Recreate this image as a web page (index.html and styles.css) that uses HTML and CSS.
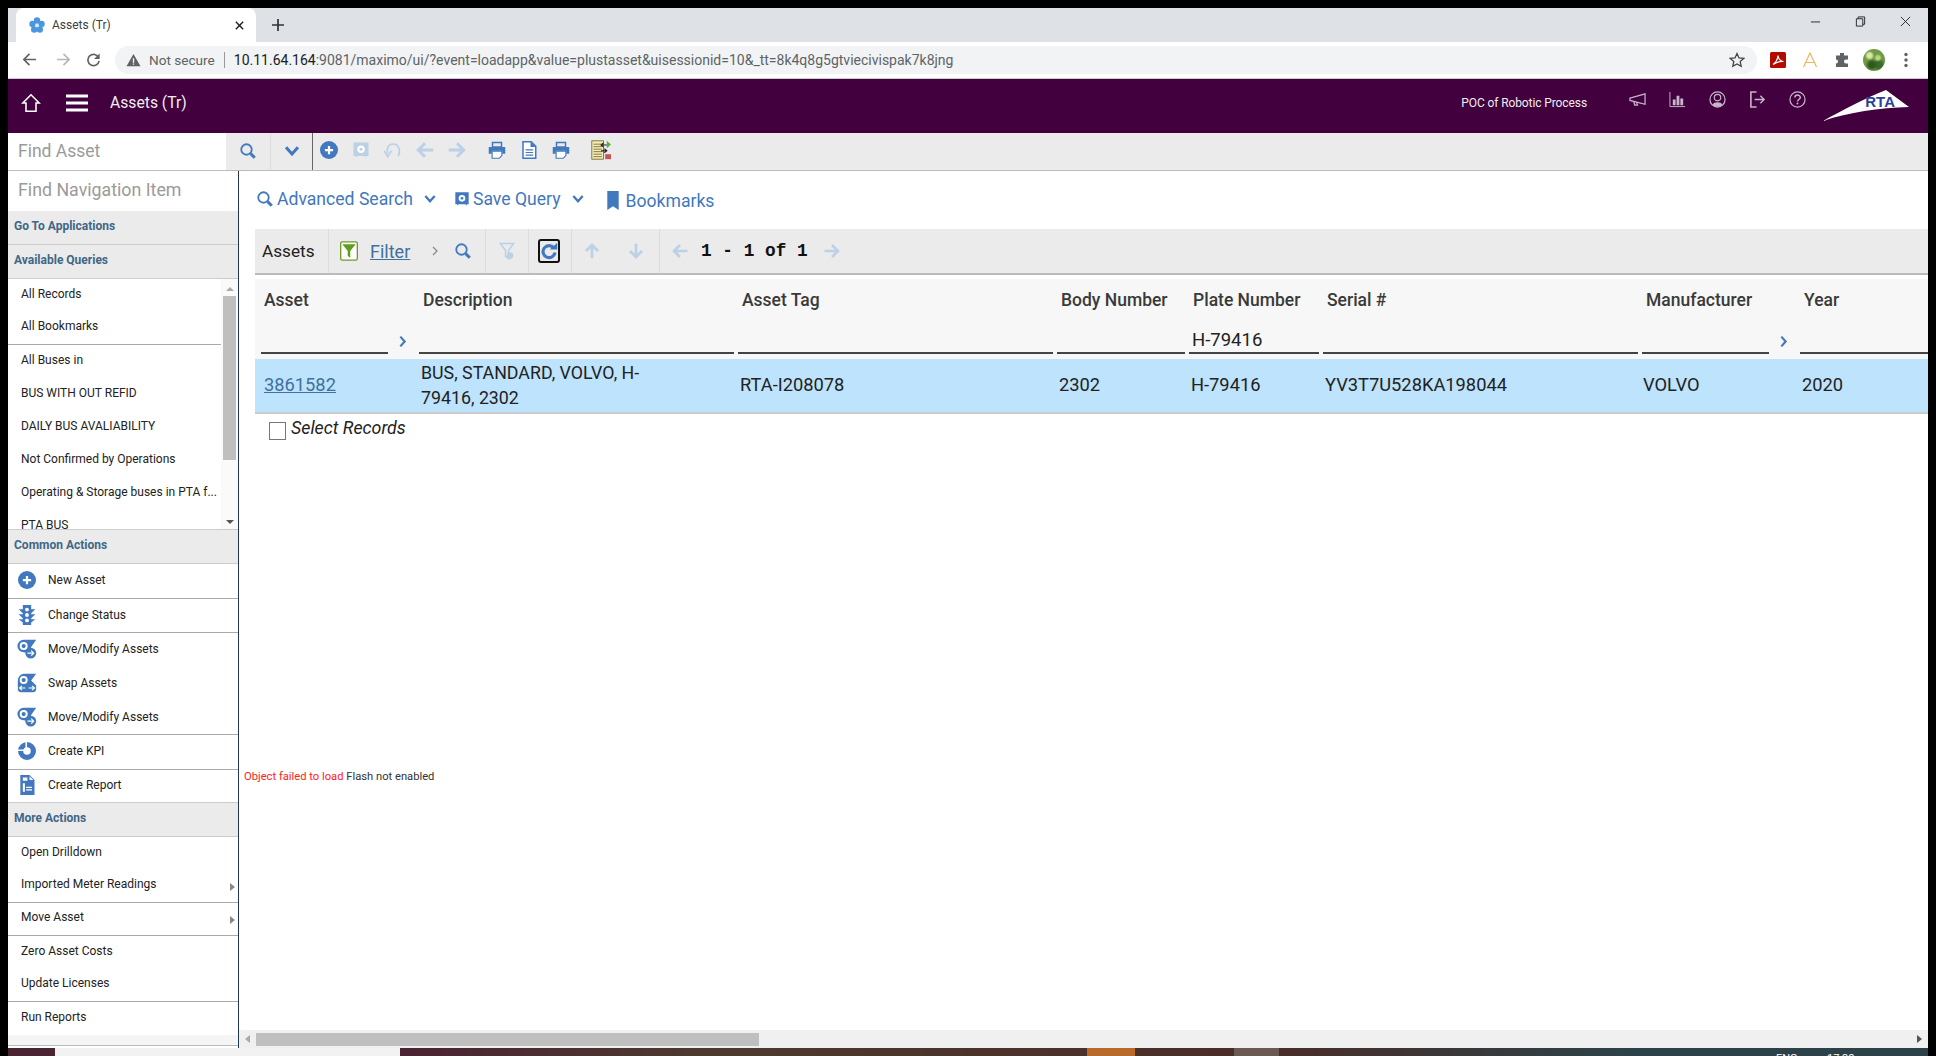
FILE: index.html
```html
<!doctype html>
<html lang="en">
  <head>
    <meta charset="UTF-8" />
    <title>Assets (Tr)</title>
    <link rel="stylesheet" href="styles.css">
  </head>

  <body>
    <svg class="defs" width="0" height="0">
      <symbol id="i-search" viewBox="0 0 24 24"><circle cx="10" cy="10" r="7" fill="none" stroke="currentColor" stroke-width="2.4"/><path d="M15.5 15.5l5.5 5.5" stroke="currentColor" stroke-width="4"/></symbol>
      <symbol id="i-chevron" viewBox="0 0 24 24"><path d="M4 7l8 9 8-9" fill="none" stroke="currentColor" stroke-width="4"/></symbol>
      <symbol id="i-right" viewBox="0 0 24 24"><path d="M8 3l8 9-8 9" fill="none" stroke="currentColor" stroke-width="4"/></symbol>
      <symbol id="i-more" viewBox="0 0 24 24"><path d="M8 4l8 8-8 8" fill="none" stroke="currentColor" stroke-width="2.500"/></symbol>
      <symbol id="i-plus" viewBox="0 0 24 24"><circle cx="12" cy="12" r="12" fill="currentColor"/><path d="M12 6.5v11M6.500 12h11" stroke="#fff" stroke-width="3"/></symbol>
      <symbol id="i-save" viewBox="0 0 24 24"><path d="M2 2h20v18h-3v2l-2-2H7l-2 2v-2H2z" fill="currentColor"/><circle cx="12" cy="11" r="5" fill="#fff"/><circle cx="12" cy="11" r="2" fill="currentColor"/></symbol>
      <symbol id="i-undo" viewBox="0 0 24 24"><path d="M19 20c3-5 2-16-7-16C5 4 3 11 5 17" fill="none" stroke="currentColor" stroke-width="2.200"/><path d="M0 13l5 8 5-8" fill="none" stroke="currentColor" stroke-width="2.200"/></symbol>
      <symbol id="i-left" viewBox="0 0 24 24"><path d="M12 3l-9 9 9 9M3 12h20" fill="none" stroke="currentColor" stroke-width="4"/></symbol>
      <symbol id="i-print" viewBox="0 0 24 24"><path d="M6 2h12v6H6z" fill="none" stroke="currentColor" stroke-width="2"/><path d="M1 8h22v9h-4v-4H5v4H1z" fill="currentColor"/><path d="M5.500 13.500h13v6l-3.500 3.500h-9.500z" fill="#fff" stroke="currentColor" stroke-width="1.500"/></symbol>
      <symbol id="i-doc" viewBox="0 0 24 24"><path d="M4 1h11l6 6v16H4z" fill="#fff" stroke="currentColor" stroke-width="2"/><path d="M14 1v7h7zM7.500 11h10v1.600h-10zM7.500 14.500h10v1.600h-10zM7.500 18h10v1.600h-10z" fill="currentColor"/></symbol>
      <symbol id="i-bookmark" viewBox="0 0 12 20"><path d="M0 0h12v20l-6-4-6 4z" fill="currentColor"/></symbol>
      <symbol id="i-filter" viewBox="0 0 24 24"><rect x="2" y="1" width="20" height="22" rx="2" fill="#fff" stroke="#6f9a2a" stroke-width="1.600"/><path d="M4 4h16l-6.500 8v8l-3-2v-6z" fill="#5f9e1f"/></symbol>
      <symbol id="i-filter-x" viewBox="0 0 24 24"><path d="M3 2h18l-7 9v11l-4-3v-8z" fill="none" stroke="currentColor" stroke-width="2"/><circle cx="16" cy="18" r="4.500" fill="currentColor"/></symbol>
      <symbol id="i-refresh" viewBox="0 0 24 24"><path d="M18.500 8A8 8 0 1 0 20 14" fill="none" stroke="currentColor" stroke-width="4.200"/><path d="M13 10h10V1z" fill="currentColor"/></symbol>
      <symbol id="i-up" viewBox="0 0 24 24"><path d="M3 12l9-9 9 9M12 3v20" fill="none" stroke="currentColor" stroke-width="4"/></symbol>
      <symbol id="i-down" viewBox="0 0 24 24"><path d="M3 12l9 9 9-9M12 21V1" fill="none" stroke="currentColor" stroke-width="4"/></symbol>
      <symbol id="i-status" viewBox="0 0 24 24"><path d="M7 0h10v5h5l-5 5v1h5l-5 5v1h5l-5 4v3H7v-3l-5-4h5v-1l-5-5h5v-1L2 5h5z" fill="currentColor"/><circle cx="12" cy="5.500" r="2.300" fill="#fff"/><circle cx="12" cy="12" r="2.300" fill="#fff"/><circle cx="12" cy="18.500" r="2.300" fill="#fff"/></symbol>
      <symbol id="i-move" viewBox="0 0 24 24"><path d="M8 1h15l-6 8.500a8 8 0 0 1-9 6.500A7.500 7.500 0 0 1 8 1z" fill="currentColor"/><circle cx="8" cy="8.500" r="4.800" fill="#fff"/><circle cx="8" cy="8.500" r="2.500" fill="currentColor"/><circle cx="16.500" cy="17" r="6.500" fill="currentColor"/><path d="M12.500 17h7M17 14l3 3-3 3" fill="none" stroke="#fff" stroke-width="1.500"/></symbol>
      <symbol id="i-swap" viewBox="0 0 24 24"><path d="M8 1h15l-6 8 6 6v5a4 4 0 0 1-4 3H5a4 4 0 0 1-4-3V9a8 8 0 0 1 7-8z" fill="currentColor"/><circle cx="8" cy="8.500" r="4.800" fill="#fff"/><circle cx="8" cy="8.500" r="2.500" fill="currentColor"/><path d="M3 18h7M6 15.500L3 18l3 2.500M14 18h7M18 15.500l3 2.500-3 2.500" fill="none" stroke="#fff" stroke-width="1.400"/></symbol>
      <symbol id="i-kpi" viewBox="0 0 24 24"><circle cx="12" cy="12" r="8.500" fill="none" stroke="currentColor" stroke-width="7"/><path d="M0 12h10v-2H0z" fill="#fff"/><path d="M10 0h2v10h-2z" fill="#fff"/></symbol>
      <symbol id="i-report" viewBox="0 0 24 24"><path d="M4 0h11l6 6v18H4z" fill="currentColor"/><path d="M7 10h2.500v10H7zM11 14h7v1.500h-7zM11 17h7v1.500h-7zM15 1.500V6h4.500zM7 3h5.500v4H7z" fill="#fff"/></symbol>
      <symbol id="i-notes" viewBox="0 0 24 24"><rect x="1" y="1" width="14" height="22" fill="#f6eeb8" stroke="#6d5f2a"/><path d="M3 5h10M3 8h10M3 11h10M3 14h10M3 17h10M3 20h10" stroke="#6d5f2a"/><path d="M19 1l5 4.500-5 4.500z" fill="#5fae3a"/><path d="M12 6h7M15 3.500L12 6l3 2.500M12 13h7M16 10.500l3 2.500-3 2.500" fill="none" stroke="#222" stroke-width="1.300"/><rect x="17" y="17" width="7" height="6" fill="#c9535d"/></symbol>
    </svg>

    <div class="screen">
      <!-- Browser tabs -->
      <div class="tabstrip">
        <div class="tab">
          <svg class="favicon" viewBox="0 0 16 16">
            <g fill="#4a97e0"><circle cx="8" cy="3.500" r="3.200"/><circle cx="12.500" cy="7" r="3.200"/><circle cx="10.800" cy="12.500" r="3.200"/><circle cx="5.200" cy="12.500" r="3.200"/><circle cx="3.500" cy="7" r="3.200"/></g>
            <circle cx="8" cy="8.500" r="1.800" fill="#dbeaf8"/>
          </svg>
          <span class="tab-title">Assets (Tr)</span>
          <svg class="tab-close" viewBox="0 0 12 12"><path d="M2 2l8 8M10 2l-8 8" stroke="#222" stroke-width="1.600"/></svg>
        </div>
        <svg class="tab-new" viewBox="0 0 14 14"><path d="M7 1v12M1 7h12" stroke="#333" stroke-width="1.700"/></svg>
        <div class="win-controls">
          <svg viewBox="0 0 12 12"><path d="M1 6.500h10" stroke="#222" stroke-width="1"/></svg>
          <svg viewBox="0 0 12 12"><path d="M3.500 3V1h7v8H8.500M1.500 3h7v8h-7z" fill="none" stroke="#222"/></svg>
          <svg viewBox="0 0 12 12"><path d="M1 1l10 10M11 1L1 11" stroke="#222"/></svg>
        </div>
      </div>

      <!-- Address bar -->
      <div class="addressbar">
        <svg class="nav-arrow" viewBox="0 0 16 16"><path d="M15 8H2M8 2L2 8l6 6" fill="none" stroke="#5f6368" stroke-width="1.800"/></svg>
        <svg class="nav-arrow nav-off" viewBox="0 0 16 16"><path d="M1 8h13M8 2l6 6-6 6" fill="none" stroke="#b4b7bb" stroke-width="1.800"/></svg>
        <svg class="nav-arrow" viewBox="0 0 16 16"><path d="M13.500 6A6 6 0 1 0 14 9.500" fill="none" stroke="#5f6368" stroke-width="1.800"/><path d="M14.500 1.500v6h-6z" fill="#5f6368"/></svg>
        <div class="omnibox">
          <svg class="warn" viewBox="0 0 16 16"><path d="M8 1l8 14H0z" fill="#5f6368"/><path d="M7.200 6h1.600v5H7.200zM7.200 12h1.600v1.500H7.200z" fill="#f1f3f4"/></svg>
          <span class="not-secure">Not secure</span>
          <span class="url"><b>10.11.64.164</b>:9081/maximo/ui/?event=loadapp&amp;value=plustasset&amp;uisessionid=10&amp;_tt=8k4q8g5gtviecivispak7k8jng</span>
          <svg class="star" viewBox="0 0 16 16"><path d="M8 1.500l2 4.400 4.800.5-3.600 3.200 1 4.700L8 11.900l-4.200 2.400 1-4.700L1.200 6.400 6 5.900z" fill="none" stroke="#444" stroke-width="1.300"/></svg>
        </div>
        <div class="extensions">
          <svg viewBox="0 0 16 16"><rect width="16" height="16" rx="1.500" fill="#b30b00"/><path d="M3 12.500c3-2 4.500-5 5-9 .5 4 2 5.500 5.500 6-4-.5-7 .5-10.500 3z" fill="none" stroke="#fff" stroke-width="1.200"/></svg>
          <svg viewBox="0 0 16 16"><path d="M1.500 15L8 1l6.500 14M4 10.500h8" fill="none" stroke="#f4b35e" stroke-width="1.200"/></svg>
          <svg viewBox="0 0 16 16"><path d="M6 1h4v2.500h4v4h-2a2 2 0 0 0 0 4h2V15H2v-3.500a2 2 0 0 0 0-4V3.500h4z" fill="#5f6368"/></svg>
          <span class="avatar"></span>
          <svg viewBox="0 0 16 16"><g fill="#5f6368"><circle cx="8" cy="2.500" r="1.700"/><circle cx="8" cy="8" r="1.700"/><circle cx="8" cy="13.500" r="1.700"/></g></svg>
        </div>
      </div>

      <!-- Maximo title bar -->
      <header class="titlebar">
        <svg class="home" viewBox="0 0 22 22"><path d="M11 2L2 11h3.500v9h11v-9H20z" fill="none" stroke="#fff" stroke-width="1.700"/></svg>
        <svg class="burger" viewBox="0 0 22 18"><path d="M0 2h22M0 9h22M0 16h22" stroke="#fff" stroke-width="3"/></svg>
        <span class="app-name">Assets (Tr)</span>
        <span class="org-name">POC of Robotic Process</span>
        <div class="title-icons">
          <svg viewBox="0 0 18 18"><path d="M1 7.500L17 3v11L1 10zM5 11l1 4h3l-1-3" fill="none" stroke="currentColor" stroke-width="1.300"/></svg>
          <svg viewBox="0 0 18 18"><path d="M1 1v15.500h16" fill="none" stroke="currentColor"/><path d="M4 9h3v6H4zM8 5h3v10H8zM12 8h3v7h-3z" fill="currentColor"/></svg>
          <svg viewBox="0 0 18 18"><circle cx="9" cy="9" r="8" fill="none" stroke="currentColor" stroke-width="1.300"/><circle cx="9" cy="7" r="3.400" fill="none" stroke="currentColor" stroke-width="1.200"/><path d="M3.500 14.500c2-3.500 9-3.500 11 0-3 3-8 3-11 0z" fill="currentColor"/></svg>
          <svg viewBox="0 0 18 18"><path d="M8 1H2v16h6" fill="none" stroke="currentColor" stroke-width="1.700"/><path d="M6 9h10M12 5l4 4-4 4" fill="none" stroke="currentColor" stroke-width="1.500"/></svg>
          <svg viewBox="0 0 18 18"><circle cx="9" cy="9" r="8" fill="none" stroke="currentColor" stroke-width="1.300"/><path d="M6.200 7c0-3.600 5.800-3.600 5.800 0 0 2-3 2-3 4.200" fill="none" stroke="currentColor" stroke-width="1.500"/><circle cx="9" cy="13.300" r="1" fill="currentColor"/></svg>
        </div>
        <div class="rta-logo">
          <svg viewBox="0 0 88 32"><path d="M0 31C20 20 42 8 63 0l23 17c-30 1-60 5-86 14z" fill="#fff"/></svg>
          <span class="rta-text">RTA</span>
        </div>
      </header>

      <!-- Find bar and app toolbar -->
      <div class="findbar">
        <div class="find-input">Find Asset</div>
        <div class="find-cell"><svg class="ico-18"><use href="#i-search"/></svg></div>
        <div class="find-cell find-last"><svg class="ico-18"><use href="#i-chevron"/></svg></div>
        <div class="tool"><svg class="ico-18"><use href="#i-plus"/></svg></div>
        <div class="tool off"><svg class="ico-18"><use href="#i-save"/></svg></div>
        <div class="tool off"><svg class="ico-18"><use href="#i-undo"/></svg></div>
        <div class="tool off"><svg class="ico-18"><use href="#i-left"/></svg></div>
        <div class="tool off flip"><svg class="ico-18"><use href="#i-left"/></svg></div>
        <div class="tool tool-gap"><svg class="ico-18"><use href="#i-print"/></svg></div>
        <div class="tool"><svg class="ico-18"><use href="#i-doc"/></svg></div>
        <div class="tool"><svg class="ico-18"><use href="#i-print"/></svg></div>
        <div class="tool tool-gap"><svg class="ico-20"><use href="#i-notes"/></svg></div>
      </div>

      <div class="main">
        <!-- Left navigation -->
        <aside class="sidebar">
          <div class="nav-input">Find Navigation Item</div>
          <div class="nav-head">Go To Applications</div>
          <div class="nav-head">Available Queries</div>
          <div class="queries">
            <div class="query-list">
              <div class="nav-item">All Records</div>
              <div class="nav-item sep">All Bookmarks</div>
              <div class="nav-item">All Buses in</div>
              <div class="nav-item">BUS WITH OUT REFID</div>
              <div class="nav-item">DAILY BUS AVALIABILITY</div>
              <div class="nav-item">Not Confirmed by Operations</div>
              <div class="nav-item">Operating &amp; Storage buses in PTA f...</div>
              <div class="nav-item">PTA BUS</div>
            </div>
            <div class="vscroll">
              <span class="tri-up"></span>
              <span class="vthumb"></span>
              <span class="tri-down"></span>
            </div>
          </div>
          <div class="nav-head head-top">Common Actions</div>
          <div class="action sep tall"><svg class="ico-18"><use href="#i-plus"/></svg>New Asset</div>
          <div class="action sep"><svg class="ico-20"><use href="#i-status"/></svg>Change Status</div>
          <div class="action"><svg class="ico-20"><use href="#i-move"/></svg>Move/Modify Assets</div>
          <div class="action"><svg class="ico-20"><use href="#i-swap"/></svg>Swap Assets</div>
          <div class="action sep"><svg class="ico-20"><use href="#i-move"/></svg>Move/Modify Assets</div>
          <div class="action sep tall"><svg class="ico-18"><use href="#i-kpi"/></svg>Create KPI</div>
          <div class="action short"><svg class="ico-20"><use href="#i-report"/></svg>Create Report</div>
          <div class="nav-head head-top">More Actions</div>
          <div class="nav-item">Open Drilldown</div>
          <div class="nav-item sep has-sub">Imported Meter Readings<span class="tri-right"></span></div>
          <div class="nav-item sep has-sub">Move Asset<span class="tri-right"></span></div>
          <div class="nav-item">Zero Asset Costs</div>
          <div class="nav-item sep">Update Licenses</div>
          <div class="nav-item">Run Reports</div>
          <div class="nav-foot"></div>
        </aside>

        <!-- Content -->
        <main class="content">
          <div class="query-bar">
            <a class="query-link"><svg class="ico-18"><use href="#i-search"/></svg>Advanced Search<svg class="ico-14 link-chev"><use href="#i-chevron"/></svg></a>
            <a class="query-link save-query"><svg class="ico-16"><use href="#i-save"/></svg>Save Query<svg class="ico-14 link-chev"><use href="#i-chevron"/></svg></a>
            <a class="query-link bookmarks"><svg class="bm"><use href="#i-bookmark"/></svg>Bookmarks</a>
          </div>

          <section class="panel">
            <div class="grid-tools">
              <div class="gt-cell gt-title">Assets</div>
              <div class="gt-cell gt-filter">
                <svg class="ico-20"><use href="#i-filter"/></svg>
                <a class="filter-link">Filter</a>
                <svg class="ico-12 filter-more"><use href="#i-more"/></svg>
                <svg class="ico-18 blue"><use href="#i-search"/></svg>
              </div>
              <div class="gt-cell gt-icon off"><svg class="ico-18"><use href="#i-filter-x"/></svg></div>
              <div class="gt-cell gt-icon"><span class="focus-box"><svg class="ico-18 blue"><use href="#i-refresh"/></svg></span></div>
              <div class="gt-cell gt-sort off">
                <svg class="ico-16"><use href="#i-up"/></svg>
                <svg class="ico-16"><use href="#i-down"/></svg>
              </div>
              <div class="gt-cell gt-pages">
                <svg class="ico-16 off"><use href="#i-left"/></svg>
                <span class="page-count">1 - 1 of 1</span>
                <svg class="ico-16 off flip"><use href="#i-left"/></svg>
              </div>
            </div>

            <div class="grid grid-head">
              <div class="th th-first">Asset</div>
              <div class="th">Description</div>
              <div class="th">Asset Tag</div>
              <div class="th">Body Number</div>
              <div class="th">Plate Number</div>
              <div class="th">Serial #</div>
              <div class="th">Manufacturer</div>
              <div class="th">Year</div>

              <div class="tf tf-first"><span class="tf-box tf-short"></span><svg class="ico-13 blue"><use href="#i-right"/></svg></div>
              <div class="tf"><span class="tf-box"></span></div>
              <div class="tf"><span class="tf-box"></span></div>
              <div class="tf"><span class="tf-box"></span></div>
              <div class="tf"><span class="tf-box">H-79416</span></div>
              <div class="tf"><span class="tf-box"></span></div>
              <div class="tf"><span class="tf-box tf-short"></span><svg class="ico-13 blue"><use href="#i-right"/></svg></div>
              <div class="tf"><span class="tf-box"></span></div>
            </div>

            <div class="grid grid-row">
              <div class="td td-first"><a class="asset-link">3861582</a></div>
              <div class="td td-wrap">BUS, STANDARD, VOLVO, H-79416, 2302</div>
              <div class="td">RTA-I208078</div>
              <div class="td">2302</div>
              <div class="td">H-79416</div>
              <div class="td">YV3T7U528KA198044</div>
              <div class="td td-maker">VOLVO</div>
              <div class="td">2020</div>
            </div>

            <label class="select-records"><span class="checkbox"></span>Select Records</label>
          </section>

          <p class="flash"><span class="flash-err">Object failed to load</span> Flash not enabled</p>

          <div class="hscroll">
            <span class="tri-left"></span>
            <span class="hthumb"></span>
            <span class="tri-right dark"></span>
          </div>
        </main>
      </div>

      <!-- Desktop taskbar, only the top shows -->
      <div class="taskbar">
        <span class="task-search"></span>
        <span class="task-orange"></span>
        <span class="task-grey"></span>
        <span class="task-lang">ENG</span>
        <span class="task-clock">17:30</span>
      </div>
    </div>
  </body>
</html>
```

FILE: styles.css
```css
* {
  box-sizing: border-box;
}

html,
body {
  margin: 0;
  height: 100%;
  background: #000;
  overflow: hidden;
}

.defs {
  position: absolute;
}

.screen {
  display: flex;
  flex-direction: column;
  width: 1936px;
  height: 1056px;
  padding: 8px 8px 0 8px;
  font-family: Roboto, "Noto Sans", sans-serif;
  color: #222;
}

.ico-12 { width: 12px; height: 12px; flex: none; }
.ico-13 { width: 13px; height: 13px; flex: none; }
.ico-14 { width: 14px; height: 14px; flex: none; }
.ico-16 { width: 16px; height: 16px; flex: none; }
.ico-18 { width: 18px; height: 18px; flex: none; }
.ico-20 { width: 20px; height: 20px; flex: none; }

.blue { color: #4178be; }
.flip { transform: scaleX(-1); }

/* browser */
.tabstrip {
  display: flex;
  align-items: flex-end;
  height: 34px;
  background: #dee1e6;
  flex: none;
}

.tab {
  display: flex;
  align-items: center;
  width: 240px;
  height: 34px;
  margin-left: 8px;
  padding: 0 11px 0 13px;
  background: #fff;
  border-radius: 8px 8px 0 0;
}

.favicon {
  width: 16px;
  height: 16px;
}

.tab-title {
  flex: 1;
  margin-left: 7px;
  font-size: 12px;
  color: #3c4043;
}

.tab-close {
  width: 11px;
  height: 11px;
}

.tab-new {
  width: 14px;
  height: 14px;
  margin: 0 0 10px 15px;
}

.win-controls {
  display: flex;
  align-self: flex-start;
  gap: 34px;
  margin: 8px 17px 0 auto;
}

.win-controls svg {
  width: 11px;
  height: 11px;
}

.addressbar {
  display: flex;
  align-items: center;
  flex: none;
  height: 37px;
  background: #fff;
  border-bottom: 1px solid #ccc;
  padding: 0 0 1px 14px;
}

.nav-arrow {
  width: 15px;
  height: 15px;
  margin-right: 19px;
}

.nav-off {
  margin-right: 15px;
}

.omnibox {
  display: flex;
  align-items: center;
  width: 1642px;
  height: 28px;
  margin-left: -5px;
  padding: 0 12px 0 11px;
  background: #f1f3f4;
  border-radius: 14px;
  font-size: 14px;
}

.warn {
  width: 15px;
  height: 14px;
}

.not-secure {
  margin-left: 8px;
  padding-right: 9px;
  border-right: 1px solid #999;
  font-size: 13.600px;
  color: #5f6368;
  line-height: 16px;
}

.url {
  flex: 1;
  margin-left: 9px;
  color: #5f6368;
}

.url b {
  font-weight: 400;
  color: #202124;
}

.star {
  width: 16px;
  height: 16px;
}

.extensions {
  display: flex;
  align-items: center;
  gap: 16px;
  margin-left: 13px;
}

.extensions svg {
  width: 16px;
  height: 16px;
}

.avatar {
  width: 22px;
  height: 22px;
  margin: 0 -3px;
  border-radius: 50%;
  background:
    radial-gradient(circle at 30% 30%, #d6e8a0 0 10%, transparent 22%),
    radial-gradient(circle at 68% 40%, #b9d67e 0 8%, transparent 20%),
    radial-gradient(circle at 40% 72%, #2f5a1e 0 14%, transparent 30%),
    radial-gradient(circle at 72% 72%, #3c6b26 0 14%, transparent 30%),
    #6f9a48;
}

/* maximo header */
.titlebar {
  display: flex;
  align-items: center;
  flex: none;
  height: 54px;
  padding: 0 0 7px 13px;
  background: #42003f;
}

.home {
  width: 20px;
  height: 20px;
}

.burger {
  width: 22px;
  height: 18px;
  margin-left: 25px;
}

.app-name {
  margin-left: 22px;
  font-size: 15.700px;
  color: #eee;
}

.org-name {
  margin-left: auto;
  font-size: 12px;
  letter-spacing: -0.1px;
  color: #eee;
}

.title-icons {
  display: flex;
  gap: 23px;
  margin: -7px 0 0 42px;
  color: #c9b5cb;
}

.title-icons svg {
  width: 17px;
  height: 17px;
}

.rta-logo {
  position: relative;
  width: 88px;
  height: 32px;
  margin: 7px 17px 0 17px;
}

.rta-logo svg {
  width: 88px;
  height: 32px;
}

.rta-text {
  position: absolute;
  top: 3px;
  right: 16px;
  font-family: "Liberation Sans", sans-serif;
  font-size: 15px;
  font-weight: 700;
  color: #2d3f95;
}

/* find bar */
.findbar {
  display: flex;
  align-items: stretch;
  flex: none;
  height: 38px;
  background: #ebebeb;
  border-bottom: 1px solid #bbb;
}

.find-input {
  display: flex;
  align-items: center;
  width: 218px;
  padding: 0 0 1px 10px;
  background: #fff;
  font-size: 17.500px;
  color: #9a9a9a;
}

.find-cell {
  display: flex;
  align-items: center;
  justify-content: center;
  width: 45px;
  padding-bottom: 2px;
  color: #4178be;
  border-right: 1px solid #ddd;
}

.find-last {
  width: 42px;
  border-right: 1px solid #666;
}

.tool {
  display: flex;
  align-items: center;
  justify-content: center;
  width: 32px;
  padding-bottom: 3px;
  color: #4178be;
}

.tool-gap {
  margin-left: 8px;
}

.off {
  color: #bcd0e6;
}

/* main */
.main {
  display: flex;
  flex: 1;
  min-height: 0;
  background: #fff;
}

.sidebar {
  display: flex;
  flex-direction: column;
  flex: none;
  width: 231px;
  border-right: 1px solid #1f3550;
  font-size: 12px;
}

.nav-input {
  display: flex;
  align-items: center;
  flex: none;
  height: 40px;
  padding: 0 0 4px 10px;
  font-size: 17.800px;
  color: #9a9a9a;
}

.nav-head {
  display: flex;
  align-items: center;
  flex: none;
  height: 34px;
  padding: 0 0 4px 6px;
  background: #ebebeb;
  border-bottom: 1px solid #ccc;
  font-size: 12px;
  font-weight: 700;
  color: #3f6787;
}

.head-top {
  height: 35px;
  border-top: 1px solid #ccc;
}

.queries {
  display: flex;
  flex: none;
  height: 250px;
  overflow: hidden;
}

.query-list {
  flex: 1;
}

.nav-item {
  display: flex;
  align-items: center;
  flex: none;
  height: 33px;
  padding: 0 0 4px 13px;
  white-space: nowrap;
}

.sep {
  border-bottom: 1px solid #aaa;
}

.tri-right {
  display: inline-block;
  width: 0;
  height: 0;
  border-left: 5px solid #888;
  border-top: 4px solid transparent;
  border-bottom: 4px solid transparent;
}

.has-sub .tri-right {
  margin: 6px 3px 0 auto;
}

.tri-right.dark {
  border-left-color: #555;
}

.vscroll {
  display: flex;
  flex-direction: column;
  align-items: center;
  flex: none;
  width: 17px;
  padding: 8px 2px 5px 2px;
  background: #fafafa;
}

.tri-up,
.tri-down {
  flex: none;
  width: 0;
  height: 0;
  border-left: 4px solid transparent;
  border-right: 4px solid transparent;
}

.tri-up {
  border-bottom: 4px solid #aaa;
}

.tri-down {
  margin-top: auto;
  border-top: 4px solid #555;
}

.vthumb {
  flex: none;
  width: 13px;
  height: 164px;
  margin-top: 5px;
  background: #bfbfbf;
}

.action {
  display: flex;
  align-items: center;
  flex: none;
  gap: 11px;
  height: 34px;
  padding: 0 0 2px 9px;
}

.action svg {
  color: #4178be;
}

.action .ico-18 {
  margin: 0 1px;
}

.tall {
  height: 35px;
}

.short {
  height: 32px;
}

.nav-foot {
  flex: 1;
  background: #f5f5f5;
  border-bottom: 1px solid #bbb;
  margin-bottom: 2px;
}

/* content */
.content {
  display: flex;
  flex-direction: column;
  flex: 1;
  min-width: 0;
}

.query-bar {
  display: flex;
  align-items: center;
  flex: none;
  height: 58px;
  padding: 0 0 3px 17px;
  font-size: 17.600px;
  color: #4178be;
}

.query-link {
  display: flex;
  align-items: center;
  margin-right: 17px;
}

.query-link > .ico-16,
.query-link > .ico-18 {
  margin-right: 3px;
}

.link-chev {
  margin-left: 10px;
}

.save-query {
  margin-right: 22px;
}

.bookmarks {
  margin-top: 4px;
}

.bm {
  width: 12px;
  height: 19px;
  margin-right: 7px;
}

.panel {
  flex: none;
  margin-left: 16px;
}

.grid-tools {
  display: flex;
  align-items: stretch;
  height: 46px;
  background: #ebebeb;
  border-bottom: 2px solid #bbb;
  margin-bottom: 4px;
}

.gt-cell {
  display: flex;
  align-items: center;
  padding: 0 13px;
  border-right: 1px solid #ddd;
}

.gt-title {
  width: 74px;
  padding-left: 7px;
  font-size: 17.200px;
}

.gt-filter {
  width: 157px;
  padding-left: 10px;
}

.filter-link {
  margin-left: 11px;
  font-size: 18px;
  color: #41709e;
  text-decoration: underline;
}

.filter-more {
  margin: 0 13px 0 19px;
  color: #888;
}

.gt-icon {
  justify-content: center;
  width: 43px;
  padding: 0;
}

.focus-box {
  display: flex;
  align-items: center;
  justify-content: center;
  width: 22px;
  height: 24px;
  margin-left: -3px;
  border: 2px solid #111;
  border-radius: 3px;
}

.gt-sort {
  gap: 28px;
  width: 88px;
  padding: 0 0 0 12px;
}

.gt-pages {
  padding-left: 12px;
  border-right: 0;
}

.page-count {
  margin: 0 16px 0 13px;
  font-family: "Liberation Mono", monospace;
  font-size: 17.800px;
  font-weight: 700;
  color: #111;
}

.grid {
  display: grid;
  grid-template-columns: 160px 319px 319px 132px 134px 319px 158px 132px;
}

.grid-head {
  height: 80px;
  grid-template-rows: 43px 37px;
  background: #f7f7f7;
}

.th {
  display: flex;
  align-items: center;
  padding: 0 0 1px 8px;
  font-size: 17.500px;
  font-weight: 500;
  color: #3a3a3a;
  white-space: nowrap;
}

.th-first {
  padding-left: 9px;
}

.tf {
  display: flex;
  align-items: flex-start;
  padding: 0 0 0 4px;
}

.tf-first {
  padding-left: 6px;
}

.tf-box {
  display: block;
  flex: 1;
  height: 32px;
  padding-left: 3px;
  border-bottom: 2px solid #444;
  font-size: 18.500px;
  line-height: 36px;
}

.tf-short {
  flex: none;
  width: 127px;
}

.tf .ico-13 {
  margin: 13px 0 0 8px;
}

.grid-row {
  height: 55px;
  background: #bee3fd;
  border-bottom: 2px solid #ccc;
}

.td {
  display: flex;
  align-items: center;
  padding: 0 4px 2px 6px;
  font-size: 18.300px;
  line-height: 25px;
  color: #222;
}

.td-first {
  padding-left: 9px;
}

.td-wrap {
  padding-right: 60px;
  font-size: 17.800px;
}

.td-maker {
  padding-left: 5px;
}

.asset-link {
  color: #41709e;
  text-decoration: underline;
}

.select-records {
  display: flex;
  align-items: flex-start;
  padding: 3px 0 0 14px;
  font-size: 17.800px;
  font-style: italic;
  line-height: 22px;
  color: #222;
}

.checkbox {
  flex: none;
  width: 17px;
  height: 18px;
  margin: 5px 5px 0 0;
  border: 1px solid #777;
  background: #fff;
}

.flash {
  flex: none;
  margin: 329px 0 0 5px;
  font-size: 11.200px;
  line-height: 16px;
  color: #333;
}

.flash-err {
  color: #f22;
}

.hscroll {
  display: flex;
  align-items: center;
  flex: none;
  height: 18px;
  margin-top: auto;
  padding: 0 6px;
  background: #f0f0f0;
}

.tri-left {
  flex: none;
  width: 0;
  height: 0;
  border-right: 5px solid #aaa;
  border-top: 4px solid transparent;
  border-bottom: 4px solid transparent;
}

.hthumb {
  flex: none;
  width: 503px;
  height: 13px;
  margin-left: 6px;
  background: #bfbfbf;
}

.hscroll .tri-right {
  margin-left: auto;
}

/* taskbar */
.taskbar {
  position: relative;
  flex: none;
  height: 8px;
  overflow: hidden;
  background: linear-gradient(90deg, #4a2433 0, #4a2433 400px, #4c3a30 700px, #4a2c28 1250px, #2d4248 1620px, #2c4248 100%);
}

.task-search {
  position: absolute;
  top: 0;
  left: 47px;
  width: 345px;
  height: 8px;
  background: #f2f2f2;
}

.task-orange {
  position: absolute;
  top: 0;
  left: 1079px;
  width: 48px;
  height: 8px;
  background: #b86a2a;
}

.task-grey {
  position: absolute;
  top: 0;
  left: 1226px;
  width: 45px;
  height: 8px;
  background: #6b5a54;
}

.task-lang,
.task-clock {
  position: absolute;
  top: 4px;
  font-size: 11px;
  line-height: 13px;
  color: #fff;
}

.task-lang {
  left: 1768px;
}

.task-clock {
  left: 1819px;
}
```
